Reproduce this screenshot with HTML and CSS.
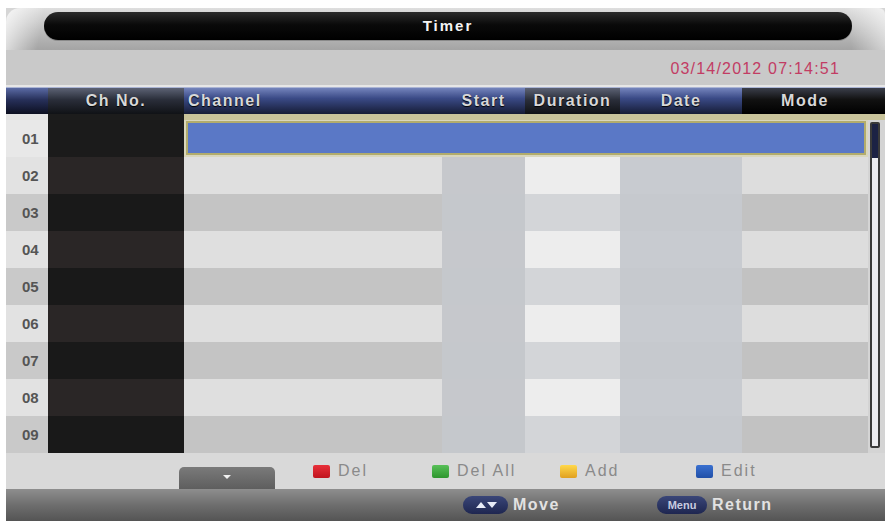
FILE: index.html
```html
<!DOCTYPE html>
<html lang="en">
<head>
    <meta charset="UTF-8">
    <title>Timer</title>
    <link rel="stylesheet" href="styles.css">
</head>
<body>
<div class="screen">
    <div class="titlebar">
        <div class="title-pill">Timer</div>
    </div>
    <div class="datebar"><span class="clock">03/14/2012 07:14:51</span></div>

    <div class="thead">
        <div class="th navy"></div>
        <div class="th dim">Ch No.</div>
        <div class="th blue left">Channel</div>
        <div class="th blue">Start</div>
        <div class="th dim">Duration</div>
        <div class="th blue">Date</div>
        <div class="th black">Mode</div>
        <div class="th black"></div>
    </div>
    <div class="sep"></div>

    <div class="tbody">
        <div class="rows">
            <div class="row sel">
                <div class="num">01</div><div class="chno"></div>
                <div class="selcell"><div class="selbar"></div></div>
            </div>
            <div class="row even">
                <div class="num">02</div><div class="chno"></div><div class="ch"></div><div class="st"></div><div class="du"></div><div class="dt"></div><div class="md"></div>
            </div>
            <div class="row odd">
                <div class="num">03</div><div class="chno"></div><div class="ch"></div><div class="st"></div><div class="du"></div><div class="dt"></div><div class="md"></div>
            </div>
            <div class="row even">
                <div class="num">04</div><div class="chno"></div><div class="ch"></div><div class="st"></div><div class="du"></div><div class="dt"></div><div class="md"></div>
            </div>
            <div class="row odd">
                <div class="num">05</div><div class="chno"></div><div class="ch"></div><div class="st"></div><div class="du"></div><div class="dt"></div><div class="md"></div>
            </div>
            <div class="row even">
                <div class="num">06</div><div class="chno"></div><div class="ch"></div><div class="st"></div><div class="du"></div><div class="dt"></div><div class="md"></div>
            </div>
            <div class="row odd">
                <div class="num">07</div><div class="chno"></div><div class="ch"></div><div class="st"></div><div class="du"></div><div class="dt"></div><div class="md"></div>
            </div>
            <div class="row even">
                <div class="num">08</div><div class="chno"></div><div class="ch"></div><div class="st"></div><div class="du"></div><div class="dt"></div><div class="md"></div>
            </div>
            <div class="row odd">
                <div class="num">09</div><div class="chno"></div><div class="ch"></div><div class="st"></div><div class="du"></div><div class="dt"></div><div class="md"></div>
            </div>
        </div>
        <div class="scroll">
            <div class="track"><div class="thumb"></div></div>
        </div>
    </div>

    <div class="legend">
        <div class="tab"><span class="tri"></span></div>
        <div class="key k-del"><span class="sq red"></span>Del</div>
        <div class="key k-delall"><span class="sq green"></span>Del All</div>
        <div class="key k-add"><span class="sq yellow"></span>Add</div>
        <div class="key"><span class="sq blue"></span>Edit</div>
    </div>

    <div class="footer">
        <div class="hint k-move">
            <span class="pill">
                <svg width="24" height="10" viewBox="0 0 24 10">
                    <path d="M2 8 L7 2 L12 8 Z" fill="#e8ecf8"/>
                    <path d="M13 2 L23 2 L18 8 Z" fill="#e8ecf8"/>
                </svg>
            </span>Move
        </div>
        <div class="hint">
            <span class="pill menu">Menu</span>Return
        </div>
    </div>
</div>
</body>
</html>
```

FILE: styles.css
```css
body {
    margin: 0;
    background: #ffffff;
    font-family: "Liberation Sans", Arial, sans-serif;
}
.screen {
    width: 879px;
    margin: 8px 0 0 6px;
    background: #d6d6d6;
}

/* title */
.titlebar {
    height: 42px;
    padding: 4px 33px 0 38px;
    box-sizing: border-box;
    border-radius: 14px 6px 0 0;
    background:
        linear-gradient(100deg, rgba(255,255,255,0.75) 0, rgba(255,255,255,0) 38px),
        linear-gradient(260deg, rgba(255,255,255,0.6) 0, rgba(255,255,255,0) 40px),
        linear-gradient(#dedede, #b4b4b4 70%, #a4a4a4);
}
.title-pill {
    height: 28px;
    border-radius: 14px;
    background: linear-gradient(#2c2c2c, #0a0a0a 45%, #000);
    box-shadow: 0 1px 0 #8a8a8a;
    color: #f4f4f4;
    font-weight: bold;
    font-size: 15px;
    letter-spacing: 2px;
    line-height: 28px;
    text-align: center;
}
.datebar {
    height: 37px;
    background: #c9c9c9;
    border-bottom: 2px solid #e6e6e6;
    display: flex;
    justify-content: flex-end;
    align-items: center;
    padding-right: 45px;
    box-sizing: border-box;
}
.clock {
    color: #c23c64;
    font-size: 16px;
    letter-spacing: 1.2px;
    padding-top: 3px;
}

/* table */
.thead, .row {
    display: grid;
    grid-template-columns: 42px 136px 258px 83px 95px 122px 126px;
}
.thead {
    grid-template-columns: 42px 136px 258px 83px 95px 122px 126px 17px;
    height: 26px;
    border-top: 1px solid #aab4d4;
}
.th {
    color: #d8d8d8;
    font-weight: bold;
    font-size: 16px;
    letter-spacing: 1.5px;
    text-align: center;
    line-height: 26px;
    text-shadow: 0 1px 1px #000;
}
.th.left { text-align: left; padding-left: 4px; }
.th.navy { background: linear-gradient(#5a6aa4, #27305a 45%, #0c0f20); }
.th.blue { background: linear-gradient(#7484bc, #3a4a86 40%, #161c36); }
.th.dim { background: linear-gradient(#5c6274, #2a2e3a 45%, #101216); }
.th.black { background: linear-gradient(#3a3e4a, #111 45%, #000); }
.sep {
    height: 6px;
    background: linear-gradient(to right, #e4e4e4 0, #e4e4e4 42px, #1c1c1c 42px, #1c1c1c 178px, #c8c39a 178px);
}
.tbody {
    display: flex;
}
.rows {
    width: 862px;
}
.row {
    height: 37px;
}
.num {
    color: #555555;
    font-size: 15px;
    font-weight: bold;
    line-height: 37px;
    padding-left: 16px;
    background: #e2e2e2;
}
.chno { background: #2a2626; }
.ch { background: #dfdfdf; }
.st { background: #c6c8cc; }
.du { background: #ededed; }
.dt { background: #c8cbd0; }
.md { background: #dddddd; }

.odd .num { background: #c9c9c9; }
.odd .chno { background: #191919; }
.odd .ch { background: #c4c4c4; }
.odd .st { background: #c5c8cc; }
.odd .du { background: #d3d5d8; }
.odd .dt { background: #c6c9ce; }
.odd .md { background: #c2c2c2; }

.sel .num { background: #e8e8e8; }
.sel .chno { background: #1b1b1b; }
.selcell {
    grid-column: 3 / 8;
    background: #d9d6bc;
    padding: 1px 2px 2px 2px;
}
.selbar {
    height: 100%;
    box-sizing: border-box;
    background: #5a78c6;
    border: 2px solid #b2ac6c;
}
.scroll {
    width: 17px;
    background: #d4d4d4;
    padding: 2px 0 5px 2px;
    box-sizing: border-box;
}
.track {
    width: 10px;
    height: 100%;
    box-sizing: border-box;
    border: 2px solid #3a3a3a;
    border-radius: 2px;
    background: #ececf0;
}
.thumb {
    height: 34px;
    background: #1c2244;
}

/* legend */
.legend {
    height: 36px;
    display: flex;
    align-items: flex-start;
    background: #d9d9d9;
    color: #8a8a8a;
    font-size: 16px;
    letter-spacing: 2px;
}
.tab {
    width: 96px;
    height: 22px;
    margin: 14px 38px 0 173px;
    border-radius: 5px 5px 0 0;
    background: linear-gradient(#7a7a7a, #5e5e5e);
    display: flex;
    justify-content: center;
    padding-top: 8px;
    box-sizing: border-box;
}
.tri {
    width: 0;
    height: 0;
    border-left: 4px solid transparent;
    border-right: 4px solid transparent;
    border-top: 4px solid #f0f0f0;
}
.key {
    display: flex;
    align-items: center;
    margin-top: 10px;
    height: 16px;
}
.k-del { width: 119px; }
.k-delall { width: 128px; }
.k-add { width: 136px; }
.sq {
    width: 17px;
    height: 13px;
    border-radius: 2px;
    margin-right: 8px;
}
.sq.red { background: linear-gradient(#e8303a, #c0141e); }
.sq.green { background: linear-gradient(#58c058, #2e962e); }
.sq.yellow { background: linear-gradient(#ffd84a, #e0a020); }
.sq.blue { background: linear-gradient(#3a70d0, #2050a8); }

/* bottom bar */
.footer {
    height: 32px;
    display: flex;
    align-items: center;
    padding-left: 457px;
    background: linear-gradient(#8e8e8e, #6e6e6e 50%, #545454);
    color: #e2e2e2;
    font-weight: bold;
    font-size: 16px;
    letter-spacing: 1.5px;
}
.hint {
    display: flex;
    align-items: center;
}
.k-move { width: 194px; }
.pill {
    height: 18px;
    border-radius: 9px;
    background: linear-gradient(#3a4678, #1e2650);
    display: flex;
    align-items: center;
    justify-content: center;
    margin-right: 5px;
    width: 45px;
}
.pill.menu {
    width: 50px;
    font-size: 11px;
    letter-spacing: 0;
    color: #c8cce0;
}
```
